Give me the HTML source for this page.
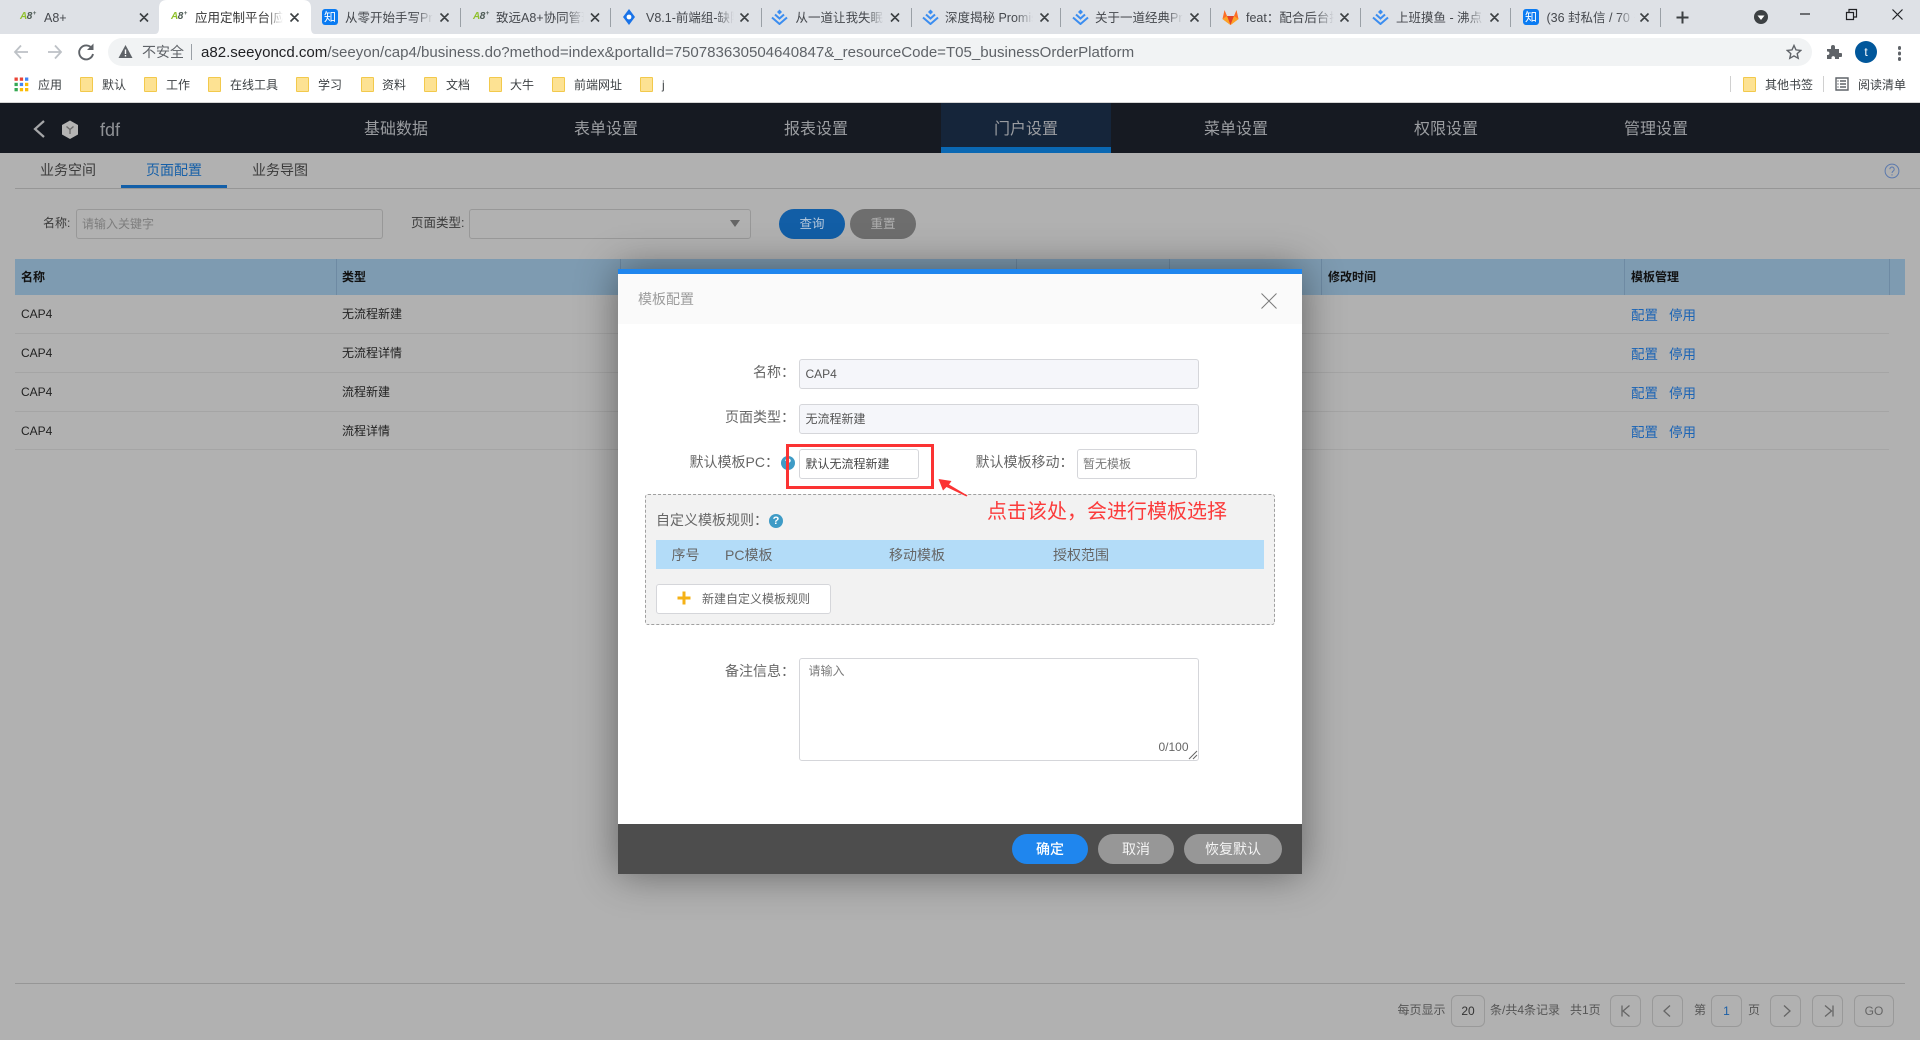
<!DOCTYPE html>
<html lang="zh-CN"><head><meta charset="utf-8"><title>模板配置</title>
<style>
html,body{margin:0;padding:0;width:1920px;height:1040px;overflow:hidden;background:#b1b1b1}
body{position:relative;font-family:"Liberation Sans","Noto Sans CJK SC",sans-serif;font-size:12px;color:#333}
.a,.t,svg.i{position:absolute}
.t{white-space:nowrap;line-height:20px;height:20px}
.tab{font-size:12.5px;color:#45484d;overflow:hidden;width:88px;-webkit-mask-image:linear-gradient(90deg,#000 80%,transparent);mask-image:linear-gradient(90deg,#000 80%,transparent);top:8px}
.sep{position:absolute;width:1px;background:#9aa0a6;top:8px;height:19px}
.zh{position:absolute;top:9px;width:16px;height:16px;border-radius:3px;background:#0a7bf2;color:#fff;font-size:12px;line-height:16px;text-align:center}
.a8{position:absolute;top:10px;font-size:10px;line-height:14px;font-weight:bold;color:#4d5a55;font-style:italic;letter-spacing:-.5px}
.a8 b{color:#8fc02c}
.a8 sup{font-size:6px;line-height:0;vertical-align:4px;margin-left:1px}
.fold{position:absolute;top:77px;width:11px;height:13px;background:#fde293;border:1px solid #f2c94c;border-radius:1px}
.bm{font-size:12px;color:#3c4043;top:75px}
.nav{font-size:16px;color:#9b9da1;top:120px;width:70px;text-align:center}
.sub{font-size:14px;color:#3a3a3a;top:160px}
.th{font-size:12px;font-weight:bold;color:#111;top:267px}
.td{font-size:12px;color:#222}
.lk{color:#1b64b5;font-size:13.5px}
.hs{position:absolute;top:259px;height:36px;width:1px;background:#6e8aa3}
.rl{position:absolute;left:15px;width:1874px;height:1px;background:#a5a5a5}
.inp{position:absolute;box-sizing:border-box;border:1px solid #d5d6da;border-radius:3px;background:#fff}
.ro{background:#f5f6fa}
.lb{font-size:14px;color:#666}
.pb{position:absolute;box-sizing:border-box;top:995px;height:32px;border:1px solid #999;border-radius:6px;text-align:center;line-height:30px;color:#666;font-size:12px}
.pt{font-size:12px;color:#555;top:1000px}
.btn{position:absolute;top:834px;height:30px;border-radius:15px;text-align:center;line-height:30px;color:#f4f4f4;font-size:14px;background:#979797}
</style></head><body>

<!-- Tab strip -->
<div class="a" style="left:0;top:0;width:1920px;height:34px;background:#dee1e6"></div>
<svg class="i" style="left:150px;top:0" width="170" height="34"><path d="M5 34Q9 34 9 28V8Q9 0 17 0H153Q161 0 161 8V28Q161 34 165 34Z" fill="#fff"/></svg>

<span class="a8" style="left:20px"><b>A</b>8<sup>+</sup></span>
<span class="t tab" style="left:44px">A8+</span>
<span class="a8" style="left:171px"><b>A</b>8<sup>+</sup></span>
<span class="t tab" style="left:195px;color:#333">应用定制平台|应用定制平台</span>
<span class="zh" style="left:322px">知</span>
<span class="t tab" style="left:345px">从零开始手写Promise</span>
<span class="a8" style="left:473px"><b>A</b>8<sup>+</sup></span>
<span class="t tab" style="left:496px">致远A8+协同管理软件</span>
<svg class="i" style="left:621px;top:9px" width="16" height="16" viewBox="0 0 16 16"><path d="M8 0L14 8L8 16L2 8Z" fill="#1a73e8"/><circle cx="8" cy="8" r="2.4" fill="#fff"/></svg>
<span class="t tab" style="left:646px">V8.1-前端组-缺陷列表</span>
<svg class="i" style="left:771px;top:9px" width="17" height="16" viewBox="0 0 17 16"><path d="M8.5 0.5L11 3L8.5 5.5L6 3Z" fill="#3b8df0"/><path d="M4 5.5L8.5 9.5L13 5.5M1 8.5L8.5 15L16 8.5" fill="none" stroke="#3b8df0" stroke-width="2"/></svg>
<span class="t tab" style="left:795.5px">从一道让我失眠的题说起</span>
<svg class="i" style="left:922px;top:9px" width="17" height="16" viewBox="0 0 17 16"><path d="M8.5 0.5L11 3L8.5 5.5L6 3Z" fill="#3b8df0"/><path d="M4 5.5L8.5 9.5L13 5.5M1 8.5L8.5 15L16 8.5" fill="none" stroke="#3b8df0" stroke-width="2"/></svg>
<span class="t tab" style="left:945px">深度揭秘 Promise 微任务</span>
<svg class="i" style="left:1072px;top:9px" width="17" height="16" viewBox="0 0 17 16"><path d="M8.5 0.5L11 3L8.5 5.5L6 3Z" fill="#3b8df0"/><path d="M4 5.5L8.5 9.5L13 5.5M1 8.5L8.5 15L16 8.5" fill="none" stroke="#3b8df0" stroke-width="2"/></svg>
<span class="t tab" style="left:1095px">关于一道经典Promise</span>
<svg class="i" style="left:1222px;top:9px" width="17" height="16" viewBox="0 0 17 16"><path d="M8.5 16L0.5 10L2.5 1L5 7H12L14.5 1L16.5 10Z" fill="#fc6d26"/><path d="M8.5 16L5 7H12Z" fill="#e24329"/><path d="M0.5 10L5 7L8.5 16Z" fill="#fca326"/><path d="M16.5 10L12 7L8.5 16Z" fill="#fca326"/></svg>
<span class="t tab" style="left:1246px">feat：配合后台接口</span>
<svg class="i" style="left:1372px;top:9px" width="17" height="16" viewBox="0 0 17 16"><path d="M8.5 0.5L11 3L8.5 5.5L6 3Z" fill="#3b8df0"/><path d="M4 5.5L8.5 9.5L13 5.5M1 8.5L8.5 15L16 8.5" fill="none" stroke="#3b8df0" stroke-width="2"/></svg>
<span class="t tab" style="left:1396px">上班摸鱼 - 沸点 - 掘金</span>
<span class="zh" style="left:1523px">知</span>
<span class="t tab" style="left:1546.5px">(36 封私信 / 70 条消息)</span>

<!-- Tab close icons -->
<svg class="i" style="left:0;top:0" width="1920" height="34" fill="none" stroke="#3c4043" stroke-width="1.6">
<path d="M140 13.5l8 8m0-8l-8 8M290.500 13.5l8 8m0-8l-8 8M440.500 13.5l8 8m0-8l-8 8M591 13.5l8 8m0-8l-8 8M740.500 13.5l8 8m0-8l-8 8M891 13.5l8 8m0-8l-8 8M1040.500 13.5l8 8m0-8l-8 8M1190.500 13.5l8 8m0-8l-8 8M1340.500 13.500l8 8m0-8l-8 8M1490.500 13.500l8 8m0-8l-8 8M1640.500 13.500l8 8m0-8l-8 8"/>
<path d="M1676.500 17.500h12M1682.500 11.500v12" stroke="#3c4043" stroke-width="2"/>
<path d="M1800 14h10" stroke="#202124" stroke-width="1.200"/>
<path d="M1846.500 12.500h7v7h-7zM1849 12.500v-3h7.500v7.500h-3" stroke="#202124" stroke-width="1.200"/>
<path d="M1892.500 9.500l10 10m0-10l-10 10" stroke="#202124" stroke-width="1.200"/>
<circle cx="1761" cy="17" r="7" fill="#3c4043" stroke="none"/>
<path d="M1757.500 15.500h7l-3.500 4.500z" fill="#fff" stroke="none"/>
</svg>
<i class="sep" style="left:460px"></i><i class="sep" style="left:610px"></i><i class="sep" style="left:761px"></i><i class="sep" style="left:911px"></i><i class="sep" style="left:1060px"></i><i class="sep" style="left:1210px"></i><i class="sep" style="left:1360px"></i><i class="sep" style="left:1510px"></i><i class="sep" style="left:1660px"></i>

<!-- Toolbar -->
<div class="a" style="left:0;top:34px;width:1920px;height:68px;background:#fff"></div>
<div class="a" style="left:0;top:102px;width:1920px;height:1px;background:#d5d5d5"></div>
<div class="a" style="left:108px;top:38px;width:1704px;height:28px;border-radius:14px;background:#f1f3f4"></div>
<svg class="i" style="left:0;top:34px" width="120" height="34" fill="none">
<path d="M28 18H15M21 11.500L15 18l6 6.500" stroke="#bdc1c6" stroke-width="1.800"/>
<path d="M48 18H61M55 11.500L61 18l-6 6.500" stroke="#bdc1c6" stroke-width="1.800"/>
<path d="M92 14.500A7 7 0 1 0 93 20" stroke="#5f6368" stroke-width="1.900"/>
<path d="M93.500 9.500v6.500h-6.500z" fill="#5f6368"/>
</svg>
<svg class="i" style="left:118px;top:44px" width="15" height="15" viewBox="0 0 15 15"><path d="M7.500 1L14.500 14H0.500Z" fill="#5f6368"/><path d="M6.800 5.500h1.400v4.500H6.800zM6.800 11h1.400v1.500H6.800z" fill="#fff"/></svg>
<span class="t" style="left:142px;top:42px;font-size:14px;color:#5f6368">不安全</span>
<div class="a" style="left:191px;top:44px;width:1px;height:16px;background:#9aa0a6"></div>
<span class="t" style="left:201px;top:43px;font-size:15.05px;color:#5f6368"><span style="color:#202124">a82.seeyoncd.com</span>/seeyon/cap4/business.do?method=index&amp;portalId=750783630504640847&amp;_resourceCode=T05_businessOrderPlatform</span>
<svg class="i" style="left:1786px;top:44px" width="16" height="16" viewBox="0 0 16 16"><path d="M8 1.500l2 4.400 4.800.5-3.600 3.200 1 4.700L8 11.900l-4.200 2.400 1-4.700L1.200 6.400 6 5.900z" fill="none" stroke="#5f6368" stroke-width="1.400"/></svg>
<svg class="i" style="left:1826px;top:44px" width="16" height="16" viewBox="0 0 16 16"><path d="M1 5h4V3a2 2 0 0 1 4 0v2h4v4h1.500a2 2 0 0 1 0 4H13v2H9v-1.500a1.800 1.800 0 0 0-3.500 0V15H1v-4h1a1.800 1.800 0 0 0 0-3.500H1z" fill="#5f6368"/></svg>
<div class="a" style="left:1855px;top:41px;width:22px;height:22px;border-radius:50%;background:#01579b;color:#fff;text-align:center;line-height:22px;font-size:12px">t</div>
<div class="a" style="left:1897.500px;top:46px;width:3.500px;height:3.500px;border-radius:50%;background:#5f6368;box-shadow:0 5.500px 0 #5f6368,0 11px 0 #5f6368"></div>

<!-- Bookmarks -->
<svg class="i" style="left:14px;top:77px" width="15" height="15" viewBox="0 0 15 15"><g><rect x="0.500" y="0.500" width="3.300" height="3.300" fill="#ea4335"/><rect x="5.800" y="0.500" width="3.300" height="3.300" fill="#ea4335"/><rect x="11" y="0.500" width="3.300" height="3.300" fill="#4285f4"/><rect x="0.500" y="5.800" width="3.300" height="3.300" fill="#34a853"/><rect x="5.800" y="5.800" width="3.300" height="3.300" fill="#4285f4"/><rect x="11" y="5.800" width="3.300" height="3.300" fill="#fbbc05"/><rect x="0.500" y="11" width="3.300" height="3.300" fill="#34a853"/><rect x="5.800" y="11" width="3.300" height="3.300" fill="#fbbc05"/><rect x="11" y="11" width="3.300" height="3.300" fill="#fbbc05"/></g></svg>
<span class="t bm" style="left:38px">应用</span>
<i class="fold" style="left:80px"></i><span class="t bm" style="left:102px">默认</span>
<i class="fold" style="left:144px"></i><span class="t bm" style="left:166px">工作</span>
<i class="fold" style="left:208px"></i><span class="t bm" style="left:230px">在线工具</span>
<i class="fold" style="left:296px"></i><span class="t bm" style="left:318px">学习</span>
<i class="fold" style="left:361px"></i><span class="t bm" style="left:382px">资料</span>
<i class="fold" style="left:424px"></i><span class="t bm" style="left:446px">文档</span>
<i class="fold" style="left:489px"></i><span class="t bm" style="left:510px">大牛</span>
<i class="fold" style="left:552px"></i><span class="t bm" style="left:574px">前端网址</span>
<i class="fold" style="left:640px"></i><span class="t bm" style="left:662px">j</span>
<div class="a" style="left:1730px;top:76px;width:1px;height:16px;background:#d0d0d0"></div>
<i class="fold" style="left:1743px"></i><span class="t bm" style="left:1765px">其他书签</span>
<div class="a" style="left:1823px;top:76px;width:1px;height:16px;background:#d0d0d0"></div>
<svg class="i" style="left:1835px;top:77px" width="14" height="14" viewBox="0 0 14 14" fill="none" stroke="#5f6368" stroke-width="1.400"><path d="M1 1h12v12H1zM5 4h6M5 7h6M5 10h6M2.500 4h1M2.500 7h1M2.500 10h1"/></svg>
<span class="t bm" style="left:1858px">阅读清单</span>

<!-- App header -->
<div class="a" style="left:0;top:103px;width:1920px;height:50px;background:#161a22"></div>
<div class="a" style="left:941px;top:103px;width:170px;height:50px;background:#15253a"></div>
<div class="a" style="left:941px;top:147px;width:170px;height:6px;background:#0a68b3"></div>
<svg class="i" style="left:32px;top:119px" width="14" height="20" viewBox="0 0 14 20"><path d="M12 2L3 10l9 8" fill="none" stroke="#a5a6a8" stroke-width="2.200"/></svg>
<svg class="i" style="left:61px;top:120px" width="18" height="19" viewBox="0 0 18 19"><path d="M9 0.500L17 5v9.500l-8 4.500-8-4.500V5z" fill="#b4b4b4"/><path d="M5.500 6.500L9 9.500l3.500-3M9 9.500V14" fill="none" stroke="#6a6a6a" stroke-width="1.300"/></svg>
<span class="t" style="left:100px;top:119.500px;font-size:18px;color:#8f9195">fdf</span>
<span class="t nav" style="left:361px">基础数据</span>
<span class="t nav" style="left:571px">表单设置</span>
<span class="t nav" style="left:781px">报表设置</span>
<span class="t nav" style="left:991px">门户设置</span>
<span class="t nav" style="left:1201px">菜单设置</span>
<span class="t nav" style="left:1411px">权限设置</span>
<span class="t nav" style="left:1621px">管理设置</span>

<!-- Sub tabs -->
<span class="t sub" style="left:40px">业务空间</span>
<span class="t sub" style="left:146px;color:#155fa8">页面配置</span>
<span class="t sub" style="left:252px">业务导图</span>
<div class="a" style="left:15px;top:188px;width:1905px;height:1px;background:#969696"></div>
<div class="a" style="left:121px;top:185px;width:106px;height:3px;background:#135fa8"></div>
<svg class="i" style="left:1884px;top:163px" width="16" height="16" viewBox="0 0 16 16"><circle cx="8" cy="8" r="6.900" fill="none" stroke="#5b79ad" stroke-width="1"/><path d="M5.800 6.200a2.200 2.200 0 1 1 3.400 1.900C8.300 8.700 8 9.100 8 10M8 11.300v1.200" fill="none" stroke="#5b79ad" stroke-width="1"/></svg>

<!-- Filter -->
<span class="t" style="left:43px;top:213px;font-size:12px;color:#3a3a3a">名称:</span>
<div class="a" style="left:76px;top:209px;width:307px;height:30px;box-sizing:border-box;border:1px solid #989898;border-radius:3px"></div>
<span class="t" style="left:82px;top:214px;font-size:12px;color:#7d7d7d">请输入关键字</span>
<span class="t" style="left:411px;top:213px;font-size:12.500px;color:#3a3a3a">页面类型:</span>
<div class="a" style="left:469px;top:209px;width:282px;height:30px;box-sizing:border-box;border:1px solid #989898;border-radius:3px"></div>
<svg class="i" style="left:730px;top:220px" width="10" height="7"><path d="M0 0h10l-5 7z" fill="#666"/></svg>
<div class="a" style="left:779px;top:209px;width:66px;height:30px;border-radius:15px;background:#125ea6;color:#b7c9dc;text-align:center;line-height:30px;font-size:12.500px">查询</div>
<div class="a" style="left:850px;top:209px;width:66px;height:30px;border-radius:15px;background:#6e6e6e;color:#b0b0b0;text-align:center;line-height:30px;font-size:12.500px">重置</div>

<!-- Table -->
<div class="a" style="left:15px;top:259px;width:1890px;height:36px;background:#7e9bb1"></div>
<i class="hs" style="left:336px"></i><i class="hs" style="left:620px"></i><i class="hs" style="left:1016px"></i><i class="hs" style="left:1169px"></i><i class="hs" style="left:1321px"></i><i class="hs" style="left:1624px"></i><i class="hs" style="left:1889px"></i>
<span class="t th" style="left:21px">名称</span>
<span class="t th" style="left:342px">类型</span>
<span class="t th" style="left:1328px">修改时间</span>
<span class="t th" style="left:1631px">模板管理</span>
<i class="rl" style="top:333px"></i><i class="rl" style="top:372px"></i><i class="rl" style="top:411px"></i><i class="rl" style="top:449px"></i>
<span class="t td" style="left:21px;top:304px">CAP4</span><span class="t td" style="left:342px;top:304px">无流程新建</span>
<span class="t td" style="left:21px;top:343px">CAP4</span><span class="t td" style="left:342px;top:343px">无流程详情</span>
<span class="t td" style="left:21px;top:382px">CAP4</span><span class="t td" style="left:342px;top:382px">流程新建</span>
<span class="t td" style="left:21px;top:421px">CAP4</span><span class="t td" style="left:342px;top:421px">流程详情</span>
<span class="t lk" style="left:1631px;top:306px">配置</span><span class="t lk" style="left:1669px;top:306px">停用</span>
<span class="t lk" style="left:1631px;top:345px">配置</span><span class="t lk" style="left:1669px;top:345px">停用</span>
<span class="t lk" style="left:1631px;top:384px">配置</span><span class="t lk" style="left:1669px;top:384px">停用</span>
<span class="t lk" style="left:1631px;top:423px">配置</span><span class="t lk" style="left:1669px;top:423px">停用</span>

<!-- Pagination -->
<div class="a" style="left:15px;top:983px;width:1890px;height:1px;background:#969696"></div>
<span class="t pt" style="left:1397.500px">每页显示</span>
<div class="pb" style="left:1451px;width:34px;color:#333">20</div>
<span class="t pt" style="left:1490px">条/共4条记录</span>
<span class="t pt" style="left:1570px">共1页</span>
<div class="pb" style="left:1610px;width:31px"></div>
<div class="pb" style="left:1652px;width:31px"></div>
<span class="t pt" style="left:1694px">第</span>
<div class="pb" style="left:1711px;width:31px;color:#1b5fa6">1</div>
<span class="t pt" style="left:1748px">页</span>
<div class="pb" style="left:1770px;width:31px"></div>
<div class="pb" style="left:1812px;width:31px"></div>
<div class="pb" style="left:1854px;width:40px">GO</div>
<svg class="i" style="left:1600px;top:995px" width="260" height="32" fill="none" stroke="#666" stroke-width="1.300"><path d="M22 10.500v11M29.500 10.500L23 16l6.500 5.500M70 10.500L64 16l6 5.500M184 10.500l6 5.500-6 5.500M225 10.500l6.500 5.500-6.500 5.500M233 10.500v11"/></svg>

<!-- Modal -->
<div class="a" style="left:618px;top:269px;width:684px;height:605px;background:#fff;box-shadow:0 0 38px rgba(0,0,0,.45)"></div>
<div class="a" style="left:618px;top:269px;width:684px;height:5px;background:#1f86ee"></div>
<div class="a" style="left:618px;top:274px;width:684px;height:50px;background:#fafafa"></div>
<span class="t" style="left:638px;top:289px;font-size:14px;color:#9c9c9c">模板配置</span>
<svg class="i" style="left:1261px;top:293px" width="16" height="16"><path d="M0.500 0.500l15 15m0-15l-15 15" stroke="#7b7b7b" fill="none"/></svg>

<span class="t lb" style="left:753px;top:362px">名称：</span>
<div class="inp ro" style="left:799px;top:359px;width:400px;height:30px"></div>
<span class="t" style="left:805.500px;top:364px;color:#555">CAP4</span>
<span class="t lb" style="left:725px;top:407px">页面类型：</span>
<div class="inp ro" style="left:799px;top:404px;width:400px;height:30px"></div>
<span class="t" style="left:805.500px;top:409px;color:#555">无流程新建</span>
<span class="t lb" style="left:689.500px;top:452px">默认模板PC：</span>
<div class="a" style="left:781px;top:456px;width:14px;height:14px;border-radius:50%;background:#3e9bc6;color:#fff;font-size:11px;line-height:14px;text-align:center;font-weight:bold">?</div>
<div class="inp" style="left:799px;top:449px;width:120px;height:30px"></div>
<span class="t" style="left:805.500px;top:454px;color:#444">默认无流程新建</span>
<div class="a" style="left:786px;top:444px;width:148px;height:45px;box-sizing:border-box;border:3px solid #fb3333"></div>
<span class="t lb" style="left:975.500px;top:452px">默认模板移动：</span>
<div class="inp" style="left:1077px;top:449px;width:120px;height:30px"></div>
<span class="t" style="left:1083px;top:454px;color:#7a7a7a">暂无模板</span>

<div class="a" style="left:645px;top:494px;width:630px;height:131px;box-sizing:border-box;border:1px dashed #a0a0a0;border-radius:3px;background:#f2f2f2"></div>
<svg class="i" style="left:935px;top:475px" width="40" height="24" viewBox="0 0 40 24"><path d="M3.500 4L16.500 6L14 9.500L32.500 20.500L31.500 21.500L11.500 12L8 15.500Z" fill="#fb3333"/></svg>
<span class="t" style="left:987px;top:499px;height:26px;line-height:26px;font-size:20px;color:#fb3b3b">点击该处，会进行模板选择</span>
<span class="t lb" style="left:656px;top:510px">自定义模板规则：</span>
<div class="a" style="left:769px;top:514px;width:14px;height:14px;border-radius:50%;background:#3e9bc6;color:#fff;font-size:11px;line-height:14px;text-align:center;font-weight:bold">?</div>
<div class="a" style="left:656px;top:540px;width:608px;height:29px;background:#b3dcf8"></div>
<span class="t lb" style="left:671.500px;top:545px">序号</span>
<span class="t lb" style="left:725px;top:545px">PC模板</span>
<span class="t lb" style="left:889px;top:545px">移动模板</span>
<span class="t lb" style="left:1053px;top:545px">授权范围</span>
<div class="inp" style="left:656px;top:584px;width:175px;height:30px"></div>
<svg class="i" style="left:677px;top:591px" width="14" height="14"><path d="M7 0.500v13M0.500 7h13" stroke="#f5b115" stroke-width="3"/></svg>
<span class="t" style="left:702px;top:589px;color:#666">新建自定义模板规则</span>

<span class="t lb" style="left:725px;top:661px">备注信息：</span>
<div class="inp" style="left:799px;top:658px;width:400px;height:103px"></div>
<span class="t" style="left:808.500px;top:661px;color:#7b7b7b">请输入</span>
<span class="t" style="left:1158.500px;top:737px;color:#666">0/100</span>
<svg class="i" style="left:1188px;top:750px" width="10" height="10"><path d="M1 9l8-8M5 9l4-4" stroke="#666" fill="none"/></svg>

<div class="a" style="left:618px;top:824px;width:684px;height:50px;background:#4d4d4d"></div>
<div class="btn" style="left:1012px;width:76px;background:#1f86ee;font-weight:500;color:#fff">确定</div>
<div class="btn" style="left:1098px;width:76px">取消</div>
<div class="btn" style="left:1184px;width:98px">恢复默认</div>

</body></html>
